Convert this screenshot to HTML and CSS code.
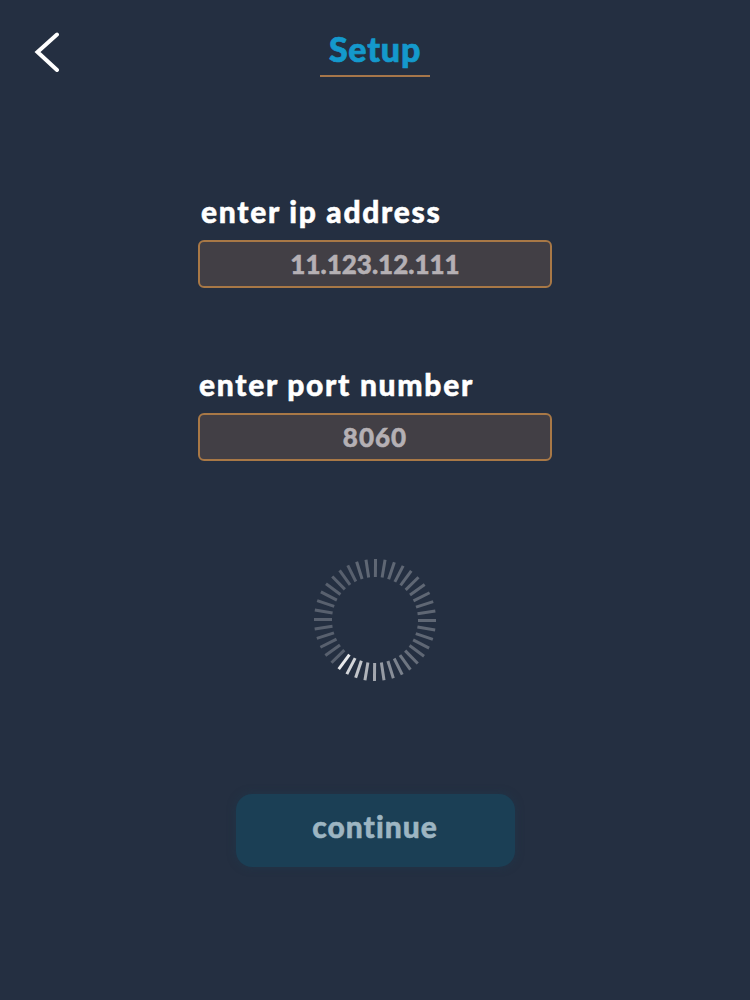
FILE: index.html
```html
<!DOCTYPE html>
<html lang="en">
<head>
  <meta charset="UTF-8" />
  <meta name="viewport" content="width=device-width, initial-scale=1" />
  <title>Setup</title>
  <link rel="stylesheet" href="styles.css">
</head>
<body>
  <header class="topbar">
    <a class="back" href="#" aria-label="Back">
      <svg viewBox="0 0 26 42" width="26" height="42" fill="none" stroke="#fff" stroke-width="4" stroke-linecap="round" stroke-linejoin="miter">
        <path d="M23 4.500 L3.500 22 L23 40" />
      </svg>
    </a>
    <h1 class="title">Setup</h1>
  </header>

  <main class="container">
    <form class="setup-form">
      <div class="field field-ip">
        <label for="ip">enter ip address</label>
        <input id="ip" type="text" value="11.123.12.111" />
      </div>
      <div class="field field-port">
        <label for="port">enter port number</label>
        <input id="port" type="text" value="8060" />
      </div>
    </form>

    <svg class="spinner" viewBox="0 0 128 128" width="128" height="128" stroke="#fff" stroke-width="3">
      <g class="ticks">
        <line x1="64" y1="3" x2="64" y2="21" transform="rotate(0.5 64 64)" stroke-opacity=".27" />
        <line x1="64" y1="3" x2="64" y2="21" transform="rotate(9.5 64 64)" stroke-opacity=".27" />
        <line x1="64" y1="3" x2="64" y2="21" transform="rotate(18.500 64 64)" stroke-opacity=".27" />
        <line x1="64" y1="3" x2="64" y2="21" transform="rotate(27.500 64 64)" stroke-opacity=".27" />
        <line x1="64" y1="3" x2="64" y2="21" transform="rotate(36.500 64 64)" stroke-opacity=".27" />
        <line x1="64" y1="3" x2="64" y2="21" transform="rotate(45.500 64 64)" stroke-opacity=".27" />
        <line x1="64" y1="3" x2="64" y2="21" transform="rotate(54.500 64 64)" stroke-opacity=".27" />
        <line x1="64" y1="3" x2="64" y2="21" transform="rotate(63.500 64 64)" stroke-opacity=".27" />
        <line x1="64" y1="3" x2="64" y2="21" transform="rotate(72.500 64 64)" stroke-opacity=".27" />
        <line x1="64" y1="3" x2="64" y2="21" transform="rotate(81.500 64 64)" stroke-opacity=".27" />
        <line x1="64" y1="3" x2="64" y2="21" transform="rotate(90.500 64 64)" stroke-opacity=".27" />
        <line x1="64" y1="3" x2="64" y2="21" transform="rotate(99.500 64 64)" stroke-opacity=".27" />
        <line x1="64" y1="3" x2="64" y2="21" transform="rotate(108.500 64 64)" stroke-opacity=".27" />
        <line x1="64" y1="3" x2="64" y2="21" transform="rotate(117.500 64 64)" stroke-opacity=".27" />
        <line x1="64" y1="3" x2="64" y2="21" transform="rotate(126.500 64 64)" stroke-opacity=".27" />
        <line x1="64" y1="3" x2="64" y2="21" transform="rotate(135.500 64 64)" stroke-opacity=".3" />
        <line x1="64" y1="3" x2="64" y2="21" transform="rotate(144.500 64 64)" stroke-opacity=".34" />
        <line x1="64" y1="3" x2="64" y2="21" transform="rotate(153.500 64 64)" stroke-opacity=".4" />
        <line x1="64" y1="3" x2="64" y2="21" transform="rotate(162.500 64 64)" stroke-opacity=".46" />
        <line x1="64" y1="3" x2="64" y2="21" transform="rotate(171.500 64 64)" stroke-opacity=".52" />
        <line x1="64" y1="3" x2="64" y2="21" transform="rotate(180.500 64 64)" stroke-opacity=".58" />
        <line x1="64" y1="3" x2="64" y2="21" transform="rotate(189.500 64 64)" stroke-opacity=".64" />
        <line x1="64" y1="3" x2="64" y2="21" transform="rotate(198.500 64 64)" stroke-opacity=".72" />
        <line x1="64" y1="3" x2="64" y2="21" transform="rotate(207.500 64 64)" stroke-opacity=".8" />
        <line x1="64" y1="3" x2="64" y2="21" transform="rotate(216.500 64 64)" stroke-opacity=".9" />
        <line x1="64" y1="3" x2="64" y2="21" transform="rotate(225.500 64 64)" stroke-opacity=".24" />
        <line x1="64" y1="3" x2="64" y2="21" transform="rotate(234.500 64 64)" stroke-opacity=".24" />
        <line x1="64" y1="3" x2="64" y2="21" transform="rotate(243.500 64 64)" stroke-opacity=".24" />
        <line x1="64" y1="3" x2="64" y2="21" transform="rotate(252.500 64 64)" stroke-opacity=".24" />
        <line x1="64" y1="3" x2="64" y2="21" transform="rotate(261.500 64 64)" stroke-opacity=".24" />
        <line x1="64" y1="3" x2="64" y2="21" transform="rotate(270.500 64 64)" stroke-opacity=".24" />
        <line x1="64" y1="3" x2="64" y2="21" transform="rotate(279.500 64 64)" stroke-opacity=".24" />
        <line x1="64" y1="3" x2="64" y2="21" transform="rotate(288.500 64 64)" stroke-opacity=".24" />
        <line x1="64" y1="3" x2="64" y2="21" transform="rotate(297.500 64 64)" stroke-opacity=".24" />
        <line x1="64" y1="3" x2="64" y2="21" transform="rotate(306.500 64 64)" stroke-opacity=".24" />
        <line x1="64" y1="3" x2="64" y2="21" transform="rotate(315.500 64 64)" stroke-opacity=".24" />
        <line x1="64" y1="3" x2="64" y2="21" transform="rotate(324.500 64 64)" stroke-opacity=".24" />
        <line x1="64" y1="3" x2="64" y2="21" transform="rotate(333.500 64 64)" stroke-opacity=".24" />
        <line x1="64" y1="3" x2="64" y2="21" transform="rotate(342.500 64 64)" stroke-opacity=".27" />
        <line x1="64" y1="3" x2="64" y2="21" transform="rotate(351.500 64 64)" stroke-opacity=".27" />
      </g>
    </svg>

    <button class="continue" type="button">continue</button>
  </main>
</body>
</html>
```

FILE: styles.css
```css
*, *::before, *::after {
  box-sizing: border-box;
}

html, body {
  height: 100%;
}

body {
  margin: 0;
  background: #242f41;
  color: #fff;
  font-family: 'Lato', sans-serif;
  overflow: hidden;
}

.topbar {
  display: grid;
  grid-template-columns: 1fr auto 1fr;
  align-items: start;
  padding: 30px 34px 0;
}

.back {
  display: block;
  width: 26px;
  height: 42px;
  grid-column: 1;
}

.back svg {
  display: block;
}

.title {
  grid-column: 2;
  width: 110px;
  margin: 0;
  padding-bottom: 8px;
  color: #1499cc;
  font-size: 34px;
  font-weight: 900;
  line-height: 37px;
  letter-spacing: 0.8px;
  text-align: center;
  border-bottom: 2px solid #a6764a;
  -webkit-text-stroke: 0.7px #1499cc;
}

.container {
  display: flex;
  flex-direction: column;
  align-items: center;
}

.setup-form {
  display: flex;
  flex-direction: column;
  gap: 76px;
  width: 354px;
  margin-top: 114px;
}

.field label {
  display: block;
  margin-bottom: 9px;
  font-size: 30px;
  font-weight: 900;
  line-height: 40px;
  letter-spacing: 1.7px;
  white-space: nowrap;
  -webkit-text-stroke: 0.5px #fff;
}

.field-ip label {
  padding-left: 3px;
}

.field-port label {
  padding-left: 1px;
}

.field input {
  display: block;
  width: 100%;
  height: 48px;
  padding: 0;
  background: #423f45;
  border: 2px solid #a87846;
  border-radius: 6px;
  color: #b5b0b4;
  font-family: inherit;
  font-size: 26px;
  font-weight: 900;
  text-align: center;
  -webkit-text-stroke: 0.5px #b5b0b4;
}

.field-port input {
  letter-spacing: 1px;
}

.spinner {
  display: block;
  margin-top: 95px;
}

.continue {
  width: 279px;
  height: 73px;
  margin-top: 110px;
  padding: 0 0 10px;
  background: #1b3f55;
  border: 0;
  border-radius: 16px;
  box-shadow: 0 0 10px rgba(27, 63, 85, 0.4);
  color: #9db5c2;
  font-family: inherit;
  font-size: 30px;
  font-weight: 900;
  letter-spacing: 1px;
  -webkit-text-stroke: 0.5px #9db5c2;
}
```
